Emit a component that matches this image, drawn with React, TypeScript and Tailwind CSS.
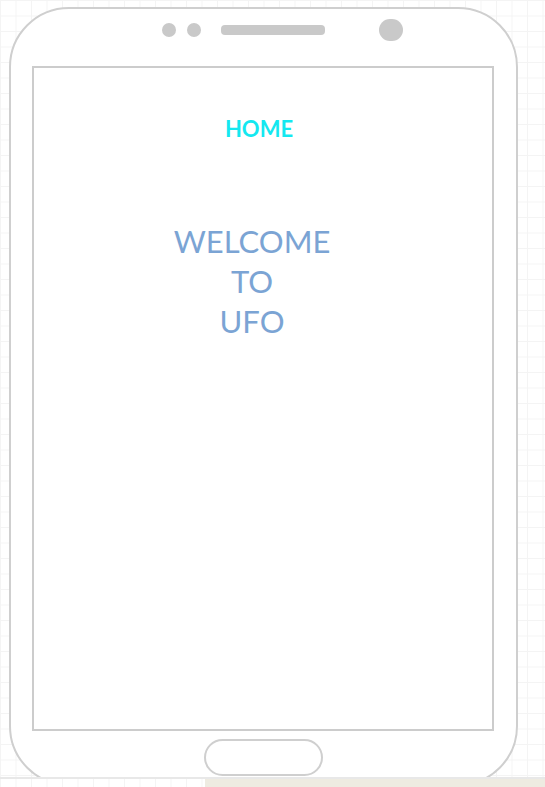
import React from 'react';

export default function App() {
  return (
    <div
      className="relative w-[545px] h-[787px] overflow-hidden bg-white bg-[linear-gradient(to_right,#f4f4f4_1px,transparent_1px),linear-gradient(to_bottom,#f4f4f4_1px,transparent_1px)] bg-[size:15.5px_15.5px]"
      style={{ fontFamily: 'Lato, "Open Sans", sans-serif' }}
    >
      {/* phone, clipped at the bottom */}
      <div className="h-[777px] overflow-hidden pt-[7px] pl-[9px]">
        <div className="w-[509px] h-[779px] rounded-[60px] border-2 border-[#cfcfcf] bg-white">
          {/* speaker / camera row */}
          <div className="flex items-center h-[24px] mt-[9px] ml-[151px]">
            <div className="w-[14px] h-[14px] rounded-full bg-[#c9c9c9]" />
            <div className="w-[14px] h-[14px] rounded-full bg-[#c9c9c9] ml-[11px]" />
            <div className="w-[104px] h-[10px] rounded-[4px] bg-[#c9c9c9] ml-[20px]" />
            <div className="w-[24px] h-[22px] rounded-full bg-[#c9c9c9] ml-[54px]" />
          </div>

          {/* screen */}
          <div className="ml-[21px] mt-[24px] w-[462px] h-[665px] border-2 border-[#cccccc] bg-white">
            <div className="pt-[48px] pr-[8px] text-center text-[22px] leading-[25px] font-bold text-[#14e8f0]">
              HOME
            </div>
            <div className="mt-[80px] pr-[22px] text-center text-[31px] leading-[40px] text-[#7ba4d4]">
              <div>WELCOME</div>
              <div>TO</div>
              <div>UFO</div>
            </div>
          </div>

          {/* home button */}
          <div className="ml-[193px] mt-[8px] w-[119px] h-[37px] rounded-full border-2 border-[#cfcfcf]" />
        </div>
      </div>

      <div className="h-[2px] bg-[#e8e8e8]" />
      <div className="ml-[205px] h-[8px] bg-[#eeebe1]" />
    </div>
  );
}
